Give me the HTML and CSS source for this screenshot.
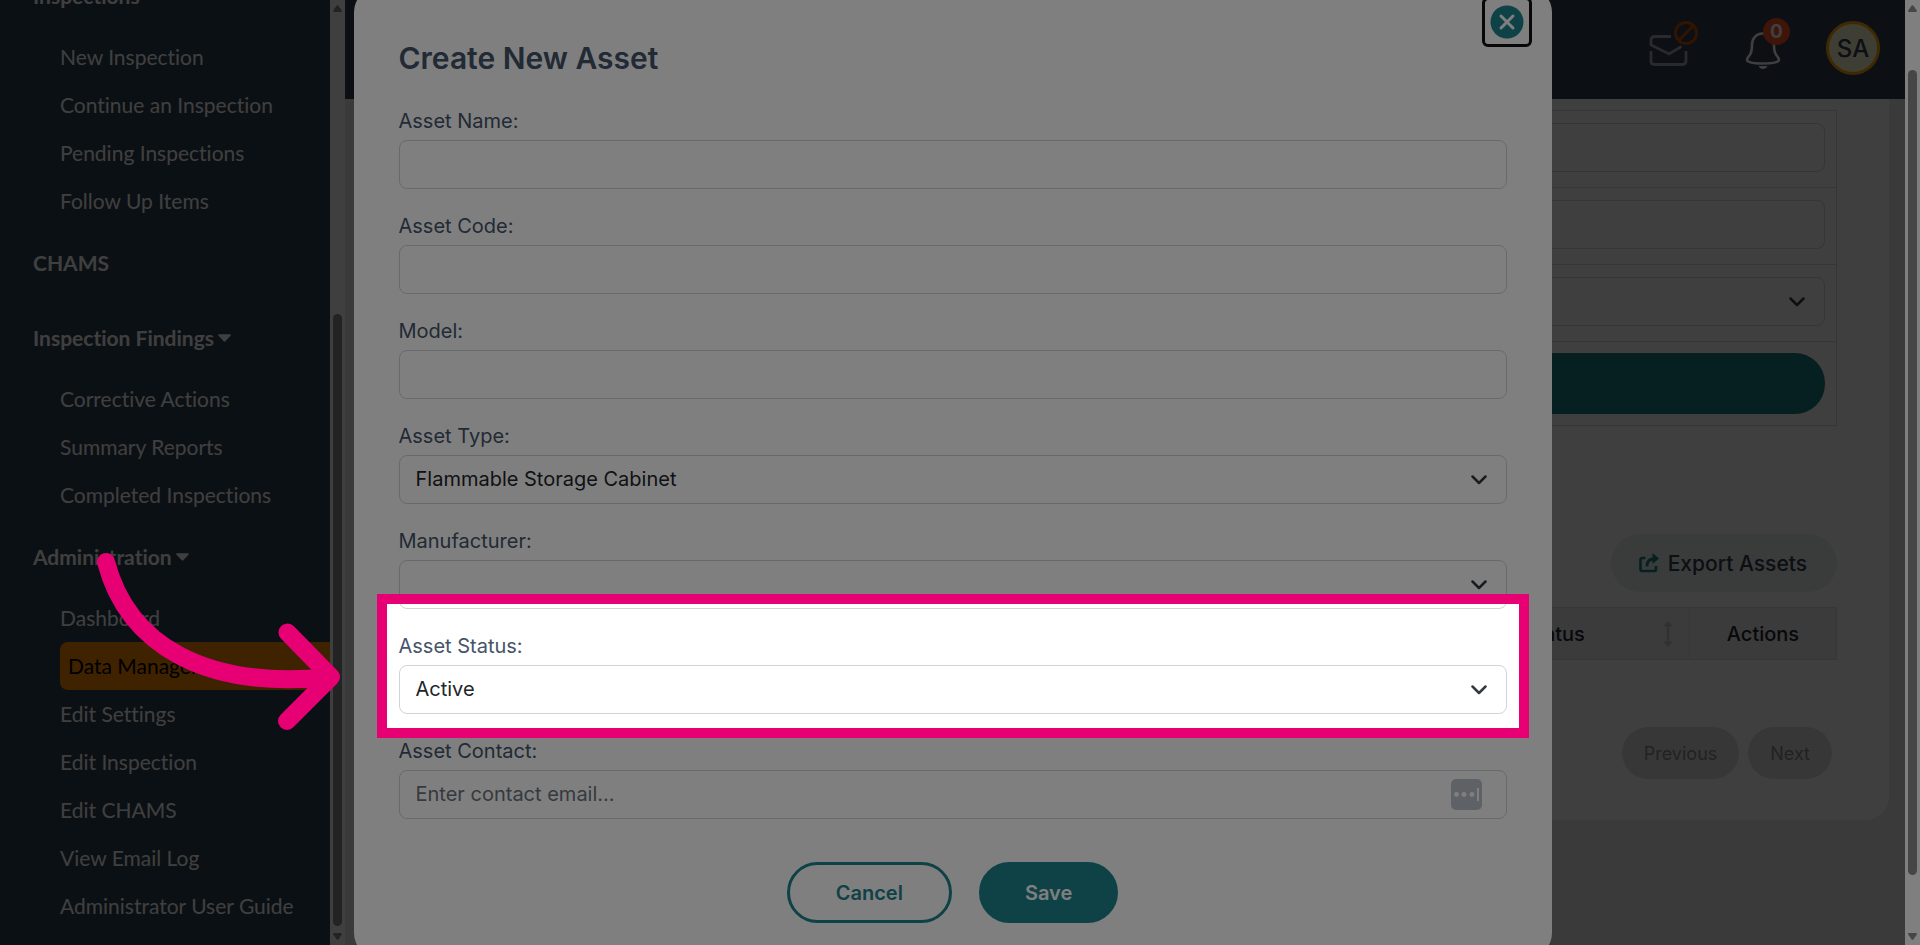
FILE: index.html
```html
<!DOCTYPE html>
<html lang="en">
<head>
<meta charset="utf-8">
<title>Create New Asset</title>
<link rel="stylesheet" href="styles.css">
</head>
<body>
<div class="window">
  <div class="app">
    <aside class="sidebar">
      <nav class="nav">
        <h2 class="nav-heading">Inspections <svg class="caret" viewBox="0 0 12 7"><path d="M1 0h10q1.400 .400 .500 1.400L6.800 6.600q-.800 .700-1.600 0L.5 1.400Q-.4 .4 1 0z"/></svg></h2>
        <ul class="nav-list">
          <li><a class="nav-link" href="#">New Inspection</a></li>
          <li><a class="nav-link" href="#">Continue an Inspection</a></li>
          <li><a class="nav-link" href="#">Pending Inspections</a></li>
          <li><a class="nav-link" href="#">Follow Up Items</a></li>
        </ul>
        <h2 class="nav-heading">CHAMS</h2>
        <h2 class="nav-heading">Inspection Findings <svg class="caret" viewBox="0 0 12 7"><path d="M1 0h10q1.400 .400 .500 1.400L6.800 6.600q-.800 .700-1.600 0L.5 1.400Q-.4 .4 1 0z"/></svg></h2>
        <ul class="nav-list">
          <li><a class="nav-link" href="#">Corrective Actions</a></li>
          <li><a class="nav-link" href="#">Summary Reports</a></li>
          <li><a class="nav-link" href="#">Completed Inspections</a></li>
        </ul>
        <h2 class="nav-heading">Administration <svg class="caret" viewBox="0 0 12 7"><path d="M1 0h10q1.400 .400 .500 1.400L6.800 6.600q-.800 .700-1.600 0L.5 1.400Q-.4 .4 1 0z"/></svg></h2>
        <ul class="nav-list">
          <li><a class="nav-link" href="#">Dashboard</a></li>
          <li><a class="nav-link nav-link-active" href="#">Data Manager</a></li>
          <li><a class="nav-link" href="#">Edit Settings</a></li>
          <li><a class="nav-link" href="#">Edit Inspection</a></li>
          <li><a class="nav-link" href="#">Edit CHAMS</a></li>
          <li><a class="nav-link" href="#">View Email Log</a></li>
          <li><a class="nav-link" href="#">Administrator User Guide</a></li>
        </ul>
      </nav>
      <div class="scrollbar">
        <svg class="scroll-arrow" viewBox="0 0 9 7"><path d="M3.500 .800q1-1.300 2 0L8.800 5.500Q9 7 8 7H1Q0 7 .2 5.500z"/></svg>
        <div class="scroll-thumb nav-thumb"></div>
        <svg class="scroll-arrow" viewBox="0 0 9 7"><path d="M3.500 6.200q1 1.300 2 0L8.800 1.500Q9 0 8 0H1Q0 0 .2 1.500z"/></svg>
      </div>
    </aside>

    <div class="page">
      <header class="topbar">
        <button class="icon-button mail-button" type="button" aria-label="Messages">
          <svg width="50" height="46" viewBox="0 0 50 46" fill="none">
            <path d="M23 16.500H6.500Q3 16.500 3 20v5l18 9 12.500-7.500M3 31v10q0 3.500 3.500 3.500h28q3.500 0 3.500-3.500V31" stroke="#a0a8b4" stroke-width="2.800"/>
            <circle cx="38" cy="13" r="10.500" stroke="#c85400" stroke-width="2.800"/>
            <path d="M31 20L45 6" stroke="#c85400" stroke-width="2.800"/>
          </svg>
        </button>
        <button class="icon-button bell-button" type="button" aria-label="Notifications">
          <svg width="36" height="40" viewBox="0 0 36 40" fill="none">
            <path d="M18 3.500C10.500 3.500 7 9 7 15c0 6-.5 8-2.600 10.500C2.500 27.700 2 28.500 2 29.800 2 31.800 6 33.500 18 33.500s16-1.700 16-3.700c0-1.300-.5-2.100-2.400-4.300C29.500 23 29 21 29 15 29 9 25.500 3.500 18 3.500z" stroke="#fff" stroke-width="2.600"/>
            <path d="M13.500 36h9q-1.500 3-4.500 3t-4.500-3z" fill="#fff"/>
          </svg>
          <span class="badge">0</span>
        </button>
        <button class="avatar" type="button">SA</button>
      </header>
      <main class="content">
        <section class="card">
          <form class="filters">
            <div class="filter-row"><input class="filter-input" type="text" aria-label="Asset name filter"></div>
            <div class="filter-row"><input class="filter-input" type="text" aria-label="Asset code filter"></div>
            <div class="filter-row">
              <div class="select-wrap">
                <select class="filter-input" aria-label="Asset type filter"><option></option></select>
                <svg class="chevron" viewBox="0 0 16 10"><path d="M1.500 1.500L8 8l6.500-6.500"/></svg>
              </div>
            </div>
            <div class="filter-row filter-row-last"><button class="search-button" type="button" aria-label="Search"></button></div>
          </form>
          <button class="export-button" type="button">
            <svg width="20" height="20" viewBox="0 0 20 20"><path d="M6.500 5H3.200Q1.500 5 1.500 6.700v9.600Q1.500 18 3.200 18h12.100q1.700 0 1.700-1.700V13" fill="none" stroke="#18808a" stroke-width="2.600"/><path d="M8 13.500c0-5 2.500-7.500 6.500-7.500" fill="none" stroke="#18808a" stroke-width="2.800"/><path d="M13.500 0L20 5.500 13.500 11z" fill="#18808a"/></svg>
            Export Assets
          </button>
          <table class="assets">
            <thead>
              <tr>
                <th class="col-name"></th>
                <th class="col-status"><div class="sort-head"><span>Status</span><svg width="10" height="26" viewBox="0 0 10 26"><path d="M5 0l5 5.500H6.200v15H10L5 26l-5-5.500h3.800v-15H0z" fill="#c4c4c8"/></svg></div></th>
                <th class="col-actions">Actions</th>
              </tr>
            </thead>
          </table>
          <div class="pager">
            <button class="pager-button" type="button">Previous</button>
            <button class="pager-button" type="button">Next</button>
          </div>
        </section>
      </main>
    </div>

    <div class="backdrop">
      <div class="modal" role="dialog" aria-labelledby="modal-title">
        <button class="close" type="button" aria-label="Close">
          <svg width="34" height="34" viewBox="0 0 34 34"><circle cx="17" cy="17" r="16.500" fill="#1c848c"/><path d="M11 11l12 12M23 11L11 23" stroke="#fff" stroke-width="3" stroke-linecap="round"/></svg>
        </button>
        <h1 class="modal-title" id="modal-title">Create New Asset</h1>
        <form class="fields">
          <div class="field"><label for="name">Asset Name:</label><input class="control" id="name" type="text"></div>
          <div class="field"><label for="code">Asset Code:</label><input class="control" id="code" type="text"></div>
          <div class="field"><label for="model">Model:</label><input class="control" id="model" type="text"></div>
          <div class="field">
            <label for="type">Asset Type:</label>
            <div class="select-wrap">
              <select class="control" id="type"><option>Flammable Storage Cabinet</option></select>
              <svg class="chevron" viewBox="0 0 16 10"><path d="M1.500 1.500L8 8l6.500-6.500"/></svg>
            </div>
          </div>
          <div class="field">
            <label for="manufacturer">Manufacturer:</label>
            <div class="select-wrap">
              <select class="control" id="manufacturer"><option></option></select>
              <svg class="chevron" viewBox="0 0 16 10"><path d="M1.500 1.500L8 8l6.500-6.500"/></svg>
            </div>
          </div>
          <div class="field">
            <label for="status">Asset Status:</label>
            <div class="select-wrap">
              <select class="control" id="status"><option>Active</option></select>
              <svg class="chevron" viewBox="0 0 16 10"><path d="M1.500 1.500L8 8l6.500-6.500"/></svg>
            </div>
          </div>
          <div class="field">
            <label for="contact">Asset Contact:</label>
            <div class="select-wrap">
              <input class="control" id="contact" type="text" placeholder="Enter contact email...">
              <svg class="autofill" viewBox="0 0 31 31"><rect width="31" height="31" rx="5" fill="#bdc4cf"/><g fill="#fff"><circle cx="5.500" cy="15.500" r="2.400"/><circle cx="13" cy="15.500" r="2.400"/><circle cx="21" cy="15.500" r="2.400"/><path d="M26 9h2v13h-2z"/></g></svg>
            </div>
          </div>
        </form>
        <div class="actions">
          <button class="button button-outline" type="button">Cancel</button>
          <button class="button button-solid" type="button">Save</button>
        </div>
      </div>
    </div>
  </div>
  <div class="scrollbar window-scrollbar">
    <svg class="scroll-arrow" viewBox="0 0 9 7"><path d="M3.500 .800q1-1.300 2 0L8.800 5.500Q9 7 8 7H1Q0 7 .2 5.500z"/></svg>
    <div class="scroll-thumb window-thumb"></div>
    <svg class="scroll-arrow" viewBox="0 0 9 7"><path d="M3.500 6.200q1 1.300 2 0L8.800 1.500Q9 0 8 0H1Q0 0 .2 1.500z"/></svg>
  </div>
  <div class="spotlight"></div>
  <svg class="pointer" width="260" height="190" viewBox="90 545 260 190"><path d="M106 562C128 645 205 690 330 677M287.500 632.500L331 677 287 721" fill="none" stroke="#e60073" stroke-width="18" stroke-linecap="round" stroke-linejoin="round"/></svg>
</div>
</body>
</html>
```
FILE: styles.css
```css
* { box-sizing: border-box; }

body {
  margin: 0;
  font-family: Inter, "Open Sans", sans-serif;
  font-size: 20px;
  color: #212529;
}

button, input, select { font: inherit; color: inherit; }
button { padding: 0; border: 0; background: none; }

.window {
  position: relative;
  display: flex;
  height: 100vh;
  overflow: hidden;
}

.app {
  position: relative;
  display: flex;
  flex: 1;
  min-width: 0;
}

/* Sidebar */
.sidebar {
  display: flex;
  flex: none;
  background: #2c4050;
  font-family: Lato, sans-serif;
  font-size: 21px;
  font-variant-ligatures: none;
  color: #fff;
}

.nav {
  display: flex;
  flex-direction: column;
  justify-content: flex-end;
  width: 330px;
  padding: 0 0 15px 33px;
  overflow: hidden;
}

.nav-heading {
  display: flex;
  flex: none;
  align-items: center;
  gap: 4px;
  height: 75px;
  margin: 0;
  font-size: 21px;
  font-weight: 700;
}

.caret { width: 13px; height: 8px; fill: #fff; }

.nav-list {
  flex: none;
  margin: 0;
  padding: 0 0 0 27px;
  list-style: none;
}

.nav-link {
  display: block;
  line-height: 48px;
  color: #fff;
  text-decoration: none;
}

.nav-link-active {
  padding-left: 8px;
  border-radius: 8px 0 0 8px;
  background: #ff8c00;
  color: #000;
}

/* Scrollbars */
.scrollbar {
  display: flex;
  flex: none;
  flex-direction: column;
  align-items: center;
  width: 15px;
  padding: 5px 0;
  background: #fff;
}

.scroll-arrow { flex: none; width: 9px; height: 7px; fill: #8c8c8c; }
.scroll-thumb { width: 9px; border-radius: 5px; background: #8c8c8c; }
.nav-thumb { flex: 1; margin: 302px 0 7px; }
.window-thumb { flex: 1; margin: 58px 0 58px; }

/* Page behind the dialog */
.page {
  display: flex;
  flex: 1;
  flex-direction: column;
  min-width: 0;
  background: #e8e8e8;
}

.topbar {
  display: flex;
  flex: none;
  align-items: center;
  justify-content: flex-end;
  height: 99px;
  padding: 0 25px 3px;
  background: #303c50;
}

.icon-button { position: relative; display: flex; }
.mail-button { margin: 0 47px 10px 0; }
.bell-button { margin: 4px 45px 0 0; }

.badge {
  position: absolute;
  top: -12px;
  right: -9px;
  width: 27px;
  height: 27px;
  border-radius: 50%;
  background: #fc5524;
  font-size: 19px;
  font-weight: 700;
  line-height: 27px;
  color: #fff;
  text-align: center;
}

.avatar {
  width: 54px;
  height: 54px;
  border: 3px solid #ffa500;
  border-radius: 50%;
  background: #f8f8d0;
  font-size: 24px;
  font-weight: 500;
  color: #303c50;
}

.content { padding: 0 16px; }

.card {
  display: flex;
  flex-direction: column;
  padding: 11px 52px 41px;
  border-radius: 0 0 24px 24px;
  background: #fff;
}

.filters {
  border: 1px solid #d8d8d8;
}

.filter-row {
  padding: 12px 11px 15px;
  border-bottom: 1px solid #d8d8d8;
}

.filter-row-last { padding: 11px; border-bottom: 0; }

.filter-input {
  display: block;
  width: 100%;
  height: 49px;
  border: 1px solid #d0d4d8;
  border-radius: 8px;
  background: #fff;
  appearance: none;
}

.search-button {
  display: block;
  width: 100%;
  height: 61px;
  border-radius: 30px;
  background: #188084;
}

.export-button {
  display: flex;
  align-items: center;
  align-self: flex-end;
  gap: 9px;
  height: 58px;
  margin: 108px 0 15px;
  padding: 0 30px 0 28px;
  border-radius: 29px;
  background: #e8f0ec;
  font-size: 21px;
  font-weight: 500;
  color: #303c50;
}

.assets {
  width: 100%;
  border-collapse: collapse;
  table-layout: fixed;
}

.assets th {
  height: 52px;
  padding: 0 16px;
  border: 1px solid #dcdce0;
  background: #ececf2;
  font-weight: 500;
  color: #212529;
}

.col-status { width: 270px; }
.col-actions { width: 147px; }

.sort-head { display: flex; align-items: center; }
.sort-head span { flex: 1; padding-left: 10px; }

.pager {
  display: flex;
  justify-content: flex-end;
  gap: 9px;
  margin-top: 67px;
  padding-right: 5px;
}

.pager-button {
  height: 52px;
  padding: 0 22px;
  border-radius: 26px;
  background: #dfdfdf;
  font-size: 18px;
  color: #888;
}

/* Dialog */
.backdrop {
  position: absolute;
  inset: 0;
  display: flex;
  align-items: center;
  justify-content: center;
  background: rgba(0, 0, 0, .5);
}

.modal {
  position: relative;
  flex: none;
  width: 1198px;
  max-width: 90%;
  padding: 52px 45px 34px;
  border-radius: 24px;
  background: #fff;
}

.close {
  position: absolute;
  top: 9px;
  right: 20px;
  display: flex;
  align-items: center;
  justify-content: center;
  width: 50px;
  height: 50px;
  border: 3px solid #101010;
  border-radius: 6px;
}

.modal-title {
  margin: 0 0 30px;
  font-size: 30px;
  font-weight: 600;
  line-height: 36px;
  color: #44546a;
}

.fields {
  display: flex;
  flex-direction: column;
  gap: 22px;
}

.field label {
  display: block;
  margin-bottom: 4px;
  line-height: 30px;
  color: #44546a;
}

.control {
  display: block;
  width: 100%;
  height: 49px;
  padding: 0 16px 2px;
  border: 1px solid #ced4da;
  border-radius: 8px;
  background: #fff;
  appearance: none;
}

.control::placeholder { color: #6c757d; opacity: 1; }

.select-wrap { display: grid; align-items: center; }
.select-wrap > * { grid-area: 1 / 1; }

.chevron {
  justify-self: end;
  width: 16px;
  height: 10px;
  margin-right: 20px;
  fill: none;
  stroke: #343a40;
  stroke-width: 2.5;
  stroke-linecap: round;
  stroke-linejoin: round;
  pointer-events: none;
}

.autofill {
  justify-self: end;
  width: 31px;
  height: 31px;
  margin-right: 25px;
}

.actions {
  display: flex;
  justify-content: center;
  gap: 27px;
  margin-top: 43px;
}

.button {
  height: 61px;
  border: 3px solid #1c848c;
  border-radius: 31px;
  font-weight: 600;
}

.button-outline { padding: 0 46px; color: #1c848c; }
.button-solid { padding: 0 43px; background: #1c848c; color: #fff; }

/* Guided-tour highlight */
.spotlight {
  position: absolute;
  top: 594px;
  left: 377px;
  width: 1152px;
  height: 144px;
  border: 10px solid #e60073;
  box-shadow: 0 0 0 2000px rgba(0, 0, 0, .5);
  pointer-events: none;
}

.pointer {
  position: absolute;
  top: 545px;
  left: 90px;
  pointer-events: none;
}
```
